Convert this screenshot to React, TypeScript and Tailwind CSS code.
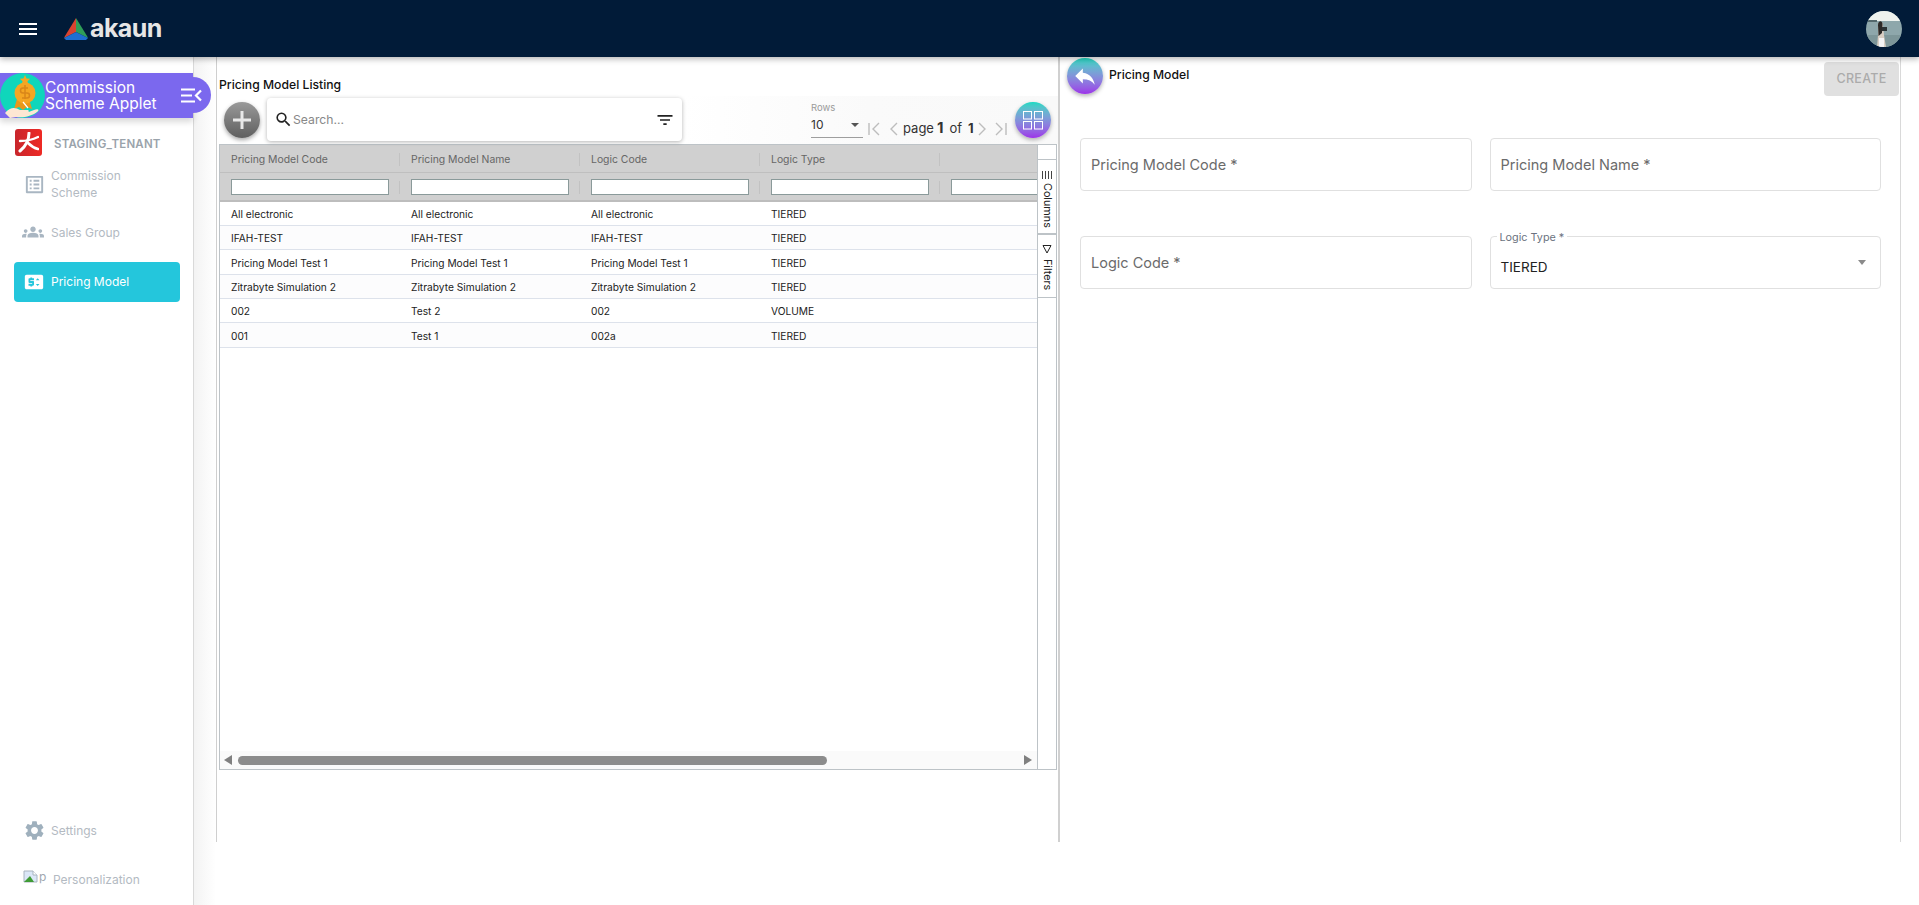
import {
  MdFilterList,
  MdGroups,
  MdListAlt,
  MdPriceChange,
  MdReply,
  MdSearch,
  MdSettings,
} from 'react-icons/md';

const rows = [
  ['All electronic', 'All electronic', 'All electronic', 'TIERED'],
  ['IFAH-TEST', 'IFAH-TEST', 'IFAH-TEST', 'TIERED'],
  ['Pricing Model Test 1', 'Pricing Model Test 1', 'Pricing Model Test 1', 'TIERED'],
  ['Zitrabyte Simulation 2', 'Zitrabyte Simulation 2', 'Zitrabyte Simulation 2', 'TIERED'],
  ['002', 'Test 2', '002', 'VOLUME'],
  ['001', 'Test 1', '002a', 'TIERED'],
];

const headers = ['Pricing Model Code', 'Pricing Model Name', 'Logic Code', 'Logic Type', ''];

function Logo() {
  return (
    <svg width="24" height="22" viewBox="0 0 24 22">
      <path d="M12 0 L1 18 L0 20 L12 14 Z" fill="#d9432f" />
      <path d="M12 0 L12 14 L24 20 L23 18 Z" fill="#2f9e58" />
      <path d="M0 20 L12 14 L24 20 L22 22 L2 22 Z" fill="#1f6fd0" />
    </svg>
  );
}

function AppletIcon() {
  return (
    <div className="w-[45px] h-[45px] rounded-full bg-[#0fd6bb] shrink-0 flex items-center justify-center">
      <svg width="38" height="44" viewBox="0 0 38 44">
        <path d="M21 1 l1.6 3.4 3.6.4-2.7 2.4.8 3.5-3.3-1.8-3.3 1.8.8-3.5-2.7-2.4 3.6-.4z" fill="#f5a623" />
        <path d="M13 25 L10 35 L15 33 L19 36 L23 33 L28 35 L25 25 Z" fill="#e8971a" />
        <circle cx="21" cy="19" r="10.5" fill="#f5a623" />
        <path d="M21 11 v14 M24 14 h-5 a2 2 0 0 0 0 5 h4 a2 2 0 0 1 0 5 h-5" stroke="#d9861a" strokeWidth="1.5" fill="none" />
        <path d="M19 28 l5 6" stroke="#fff" strokeWidth="1.2" />
        <path d="M1 39 C6 33 11 33 16 36 L24 36 C26 37 24 39 22 39 L30 36 C34 34 36 36 33 38 C28 42 20 44 12 43 L6 44 Z" fill="#fde7d3" />
      </svg>
    </div>
  );
}

function CollapseIcon() {
  return (
    <svg width="21" height="15" viewBox="0 0 21 15" fill="none" stroke="#fff" strokeWidth="2.2">
      <path d="M0 1.5 H14 M0 7.5 H11 M0 13.5 H14" />
      <path d="M20 2.5 L15 7.5 L20 12.5" />
    </svg>
  );
}

function TenantLogo() {
  return (
    <div className="w-[27px] h-[27px] rounded-[3px] bg-gradient-to-r from-[#c8262c] to-[#ee2a24] flex items-center justify-center shrink-0">
      <svg width="21" height="21" viewBox="0 0 21 21" fill="none" stroke="#fff" strokeLinecap="round">
        <path d="M11 1 C11 7 8 14 2 19" strokeWidth="3" />
        <path d="M2 9 C8 9 14 8 20 5" strokeWidth="2.4" />
        <path d="M10 11 C13 14 16 16 20 17" strokeWidth="2.6" />
      </svg>
    </div>
  );
}

function Avatar() {
  return (
    <svg width="36" height="36" viewBox="0 0 36 36">
      <defs>
        <clipPath id="avatar-clip">
          <circle cx="18" cy="18" r="18" />
        </clipPath>
      </defs>
      <g clipPath="url(#avatar-clip)">
        <rect width="36" height="36" fill="#8ea7ab" />
        <rect width="36" height="10" fill="#eef2ee" />
        <rect x="2" y="9" width="9" height="2" fill="#53686c" />
        <rect y="24" width="36" height="12" fill="#7d9699" />
        <path d="M12 14 C12 10 17 10 17 14 L18 24 L20 36 L11 36 L12 24 Z" fill="#d9cfc4" />
        <path d="M12 14 C12 9 17 9 16.5 14 L16 22 L12.5 25 Z" fill="#2c2a28" />
        <rect x="16" y="16" width="5" height="4" fill="#2a3335" />
        <rect x="13" y="27" width="5" height="9" fill="#f3f3f4" />
      </g>
    </svg>
  );
}

function BrokenImage() {
  return (
    <div className="flex items-start w-[24px] h-[22px] shrink-0">
      <svg width="16" height="16" viewBox="0 0 16 16" className="shrink-0">
        <path d="M1 3 H10 L14 7 V14 H1 Z" fill="#dbe7f7" stroke="#a9b4c0" />
        <path d="M1 14 L7 8 L11 14 Z" fill="#3f9b35" />
        <path d="M10 3 V7 H14" fill="#fff" stroke="#a9b4c0" />
      </svg>
      <span className="text-[12px] leading-[18px] text-[#a0a8b0]">p</span>
    </div>
  );
}

function Sidebar() {
  const itemText = 'text-[12px] leading-[17px] text-[#b3bac2]';
  return (
    <aside className="w-[194px] shrink-0 border-r border-[#d9d9d9] flex flex-col bg-white">
      <div className="mt-4 h-[45px] bg-[#7b68ee] flex items-center relative shadow-[0_4px_6px_rgba(0,0,0,0.15)]">
        <AppletIcon />
        <div className="text-[15.5px] leading-[16px] text-white">
          <div>Commission</div>
          <div>Scheme Applet</div>
        </div>
        <div className="absolute left-[170px] top-[4px] w-[41px] h-[36px] rounded-r-[18px] bg-[#7b68ee] flex items-center justify-end pr-[9px]">
          <CollapseIcon />
        </div>
      </div>

      <div className="flex items-center mt-[11px] pl-[15px] gap-3">
        <TenantLogo />
        <span className="mt-[5px] text-[11.5px] font-semibold text-[#9aa3ab] tracking-[0.2px]">STAGING_TENANT</span>
      </div>

      <div className="flex items-center mt-[6px] pl-[23px] gap-[5px] h-[44px]">
        <MdListAlt size={23} className="text-[#a9b6c2] shrink-0" />
        <span className={itemText}>Commission<br />Scheme</span>
      </div>

      <div className="flex items-center mt-[14px] pl-[22px] gap-[7px] h-[24px]">
        <MdGroups size={22} className="text-[#a9b6c2] shrink-0" />
        <span className={itemText}>Sales Group</span>
      </div>

      <div className="flex items-center mt-[18px] ml-[14px] mr-[13px] pl-[9px] gap-[6px] h-[40px] rounded-[4px] bg-[#24c6dc]">
        <MdPriceChange size={22} className="text-white shrink-0" />
        <span className="text-[12px] text-white">Pricing Model</span>
      </div>

      <div className="flex items-center mt-auto pl-[23px] gap-[5px] h-[24px]">
        <MdSettings size={23} className="text-[#9fb0bd] shrink-0" />
        <span className={itemText}>Settings</span>
      </div>

      <div className="flex items-center mt-[25px] mb-[14px] pl-[23px] gap-[6px] h-[24px]">
        <BrokenImage />
        <span className={itemText}>Personalization</span>
      </div>
    </aside>
  );
}

function Pagination() {
  const arrow = 'mt-[17px] stroke-[#bdbdbd] shrink-0';
  return (
    <div className="flex-1 h-full flex items-center justify-end bg-gradient-to-r from-white via-[#fafafa] to-[#f9f9f9] pr-[7px]">
      <div className="w-[52px] h-[37px] mb-[1px] flex flex-col border-b border-[#9e9e9e] relative shrink-0">
        <span className="text-[9.5px] leading-[14px] text-[#9a9a9a]">Rows</span>
        <span className="mt-px text-[12px] leading-[18px] text-[#333]">10</span>
        <span className="absolute right-[4px] top-[22px] border-x-[4px] border-x-transparent border-t-[4px] border-t-[#555]" />
      </div>
      <svg width="12" height="14" viewBox="0 0 12 14" fill="none" strokeWidth="1.4" className={`ml-[5px] ${arrow}`}>
        <path d="M1 1 V13 M11 1 L5 7 L11 13" />
      </svg>
      <svg width="8" height="14" viewBox="0 0 8 14" fill="none" strokeWidth="1.4" className={`ml-[10px] ${arrow}`}>
        <path d="M7 1 L1 7 L7 13" />
      </svg>
      <div className="ml-[5px] w-[68px] h-[18px] mt-[17px] flex items-center text-[13px] text-[#333] whitespace-nowrap shrink-0">
        <span>page</span>
        <span className="ml-[3px] text-[15px] font-bold">1</span>
        <span className="ml-[6px]">of</span>
        <span className="ml-[6px] font-bold">1</span>
      </div>
      <svg width="8" height="14" viewBox="0 0 8 14" fill="none" strokeWidth="1.4" className={`ml-[7px] ${arrow}`}>
        <path d="M1 1 L7 7 L1 13" />
      </svg>
      <svg width="12" height="14" viewBox="0 0 12 14" fill="none" strokeWidth="1.4" className={`ml-[9px] ${arrow}`}>
        <path d="M1 1 L7 7 L1 13 M11 1 V13" />
      </svg>
      <div className="ml-[8px] w-9 h-9 rounded-full bg-gradient-to-b from-[#0fd9c3] to-[#9b30e8] shadow-[0_2px_4px_rgba(0,0,0,0.3)] flex items-center justify-center shrink-0">
        <svg width="20" height="19" viewBox="0 0 20 19" fill="none" stroke="#fff" strokeWidth="1">
          <rect x="0.5" y="0.5" width="8" height="7.5" />
          <rect x="11.5" y="0.5" width="8" height="7.5" />
          <rect x="0.5" y="10.5" width="8" height="7.5" />
          <rect x="11.5" y="10.5" width="8" height="7.5" />
        </svg>
      </div>
    </div>
  );
}

function Table() {
  return (
    <div className="w-[838px] h-[626px] flex border border-[#bdc3c7]">
      <div className="w-[817px] flex flex-col overflow-hidden">
        <div className="flex h-[28px] bg-[#d0d0d0] border-b border-[#bfbfbf] shrink-0 text-[10.4px]">
          {headers.map((h, i) => (
            <div key={i} className="w-[180px] shrink-0 flex items-center pl-[11px] pt-[2px] relative text-[#666]">
              {h}
              <span className="absolute right-0 top-[8px] h-[13px] w-px bg-[#c2c2c2]" />
            </div>
          ))}
        </div>
        <div className="flex h-[29px] bg-[#d0d0d0] border-b-2 border-[#bdbdbd] shrink-0">
          {headers.map((_, i) => (
            <div key={i} className="w-[180px] shrink-0 flex items-center pl-[11px] pr-[11px] relative">
              <div className="w-[158px] h-[16px] shrink-0 bg-white border border-[#8a9a9a]" />
              <span className="absolute right-0 top-[8px] h-[13px] w-px bg-[#c2c2c2]" />
            </div>
          ))}
        </div>
        {rows.map((row, r) => (
          <div key={r} className={`flex shrink-0 border-b border-[#dde2eb] text-[10.2px] ${r === 2 || r === 5 ? 'h-[25px]' : 'h-[24px]'} ${r % 2 ? 'bg-[#fcfcfd]' : 'bg-white'}`}>
            {row.map((c, i) => (
              <div key={i} className="w-[180px] shrink-0 flex items-center pl-[11px] pt-[3px] text-[#222]">
                {c}
              </div>
            ))}
          </div>
        ))}
        <div className="flex-1" />
        <div className="h-[18px] shrink-0 bg-[#fafafa] flex items-center pl-[4px] pr-[5px]">
          <span className="border-y-[5px] border-y-transparent border-r-[8px] border-r-[#808080]" />
          <div className="ml-[6px] w-[589px] h-[9px] rounded-full bg-[#8c8c8c]" />
          <span className="ml-auto border-y-[5px] border-y-transparent border-l-[8px] border-l-[#808080]" />
        </div>
      </div>
      <div className="flex-1 border-l border-[#bdc3c7] flex flex-col text-[#222]">
        <div className="h-[15px] border-b border-[#bdc3c7]" />
        <div className="h-[75px] border-b-2 border-[#bdc3c7] flex flex-col items-center pt-[11px] gap-[4px]">
          <svg width="10" height="8" viewBox="0 0 10 8" fill="none" stroke="#444">
            <path d="M0.5 0 V8 M3.5 0 V8 M6.5 0 V8 M9.5 0 V8" />
          </svg>
          <span className="[writing-mode:vertical-rl] text-[10.8px] leading-none">Columns</span>
        </div>
        <div className="h-[63px] border-b border-[#bdc3c7] flex flex-col items-center pt-[10px] gap-[5px]">
          <svg width="10" height="9" viewBox="0 0 10 9" fill="none" stroke="#222">
            <path d="M1 0.5 L9 0.5 L5 8 Z" />
          </svg>
          <span className="[writing-mode:vertical-rl] text-[10.8px] leading-none">Filters</span>
        </div>
      </div>
    </div>
  );
}

function ListingPanel() {
  return (
    <section className="w-[842px] shrink-0 h-[785px] border-l border-[#cfcfcf] pl-[2px] pt-[16px]">
      <h2 className="text-[12.2px] leading-[23px] font-medium text-[#111]">Pricing Model Listing</h2>
      <div className="h-[48px] flex items-center">
        <div className="ml-[5px] w-9 h-9 rounded-full bg-gradient-to-b from-[#9a9a9a] to-[#5f5f5f] shadow-[0_2px_4px_rgba(0,0,0,0.35)] flex items-center justify-center shrink-0">
          <svg width="20" height="20" viewBox="0 0 20 20" stroke="#e8e8e8" strokeWidth="3">
            <path d="M10 1 V19 M1 10 H19" />
          </svg>
        </div>
        <div className="relative z-10 ml-[7px] w-[415px] h-[43px] shrink-0 bg-white rounded-[4px] shadow-[0_1px_4px_rgba(0,0,0,0.3)] flex items-center pl-[7px] pr-[7px] mb-[1px]">
          <MdSearch size={19} className="text-[#222]" />
          <span className="mt-[2px] text-[12.2px] text-[#888]">Search...</span>
          <MdFilterList size={20} className="ml-auto text-[#222]" />
        </div>
        <Pagination />
      </div>
      <Table />
    </section>
  );
}

function Field({ label }: { label: string }) {
  return (
    <div className="h-[53px] border border-[#e0e0e0] rounded-[4px] flex items-center pl-[10px] text-[14.5px] text-[#6b6b6b]">
      {label}
    </div>
  );
}

function DetailPanel() {
  return (
    <section className="w-[843px] shrink-0 h-[785px] border-l-2 border-r border-l-[#d0d0d0] border-r-[#d9d9d9]">
      <div className="flex items-start pl-[7px] pr-[1px]">
        <div className="mt-[1px] w-9 h-9 rounded-full bg-gradient-to-b from-[#0fd9c3] to-[#9b30e8] shadow-[0_2px_4px_rgba(0,0,0,0.3)] flex items-center justify-center">
          <MdReply size={26} className="text-white" />
        </div>
        <span className="ml-[6px] mt-[8px] text-[12.2px] leading-[20px] font-medium text-[#111]">Pricing Model</span>
        <button className="ml-auto mt-[5px] w-[75px] h-[34px] bg-[#e0e0e0] rounded-[4px] text-[12.5px] font-medium text-[#ababab] tracking-[0.3px]">
          CREATE
        </button>
      </div>
      <div className="mt-[42px] pl-[20px] pr-[19px] grid grid-cols-2 gap-x-[18px] gap-y-[45px]">
        <Field label="Pricing Model Code *" />
        <Field label="Pricing Model Name *" />
        <Field label="Logic Code *" />
        <div className="h-[53px] border border-[#e0e0e0] rounded-[4px] relative flex items-center pl-[10px] pr-[14px] pt-[10px] text-[13.5px] text-[#222]">
          <span className="absolute left-[6px] -top-[5px] bg-white px-[3px] text-[10.8px] leading-[12px] text-[#6b7280]">Logic Type *</span>
          TIERED
          <span className="ml-auto -mt-[10px] border-x-[4px] border-x-transparent border-t-[5px] border-t-[#8a8a8a]" />
        </div>
      </div>
    </section>
  );
}

export default function App() {
  return (
    <div className="w-[1919px] h-[905px] overflow-hidden flex flex-col bg-white font-['Inter','Open_Sans',sans-serif]">
      <header className="h-[57px] shrink-0 bg-[#011b38] flex items-center pl-[19px] pr-[17px] relative z-10 shadow-[0_2px_6px_rgba(0,0,0,0.3)]">
        <svg width="18" height="12" viewBox="0 0 18 12" stroke="#fff" strokeWidth="2">
          <path d="M0 1 H18 M0 6 H18 M0 11 H18" />
        </svg>
        <div className="ml-[27px] flex items-center gap-[2px]">
          <Logo />
          <span className="text-[25px] leading-none font-bold text-[#e6e6e6] tracking-[-0.6px]">akaun</span>
        </div>
        <div className="ml-auto">
          <Avatar />
        </div>
      </header>
      <div className="flex-1 flex min-h-0">
        <Sidebar />
        <div className="w-[22px] shrink-0 bg-gradient-to-r from-[#f3f3f3] to-white" />
        <ListingPanel />
        <DetailPanel />
      </div>
    </div>
  );
}
